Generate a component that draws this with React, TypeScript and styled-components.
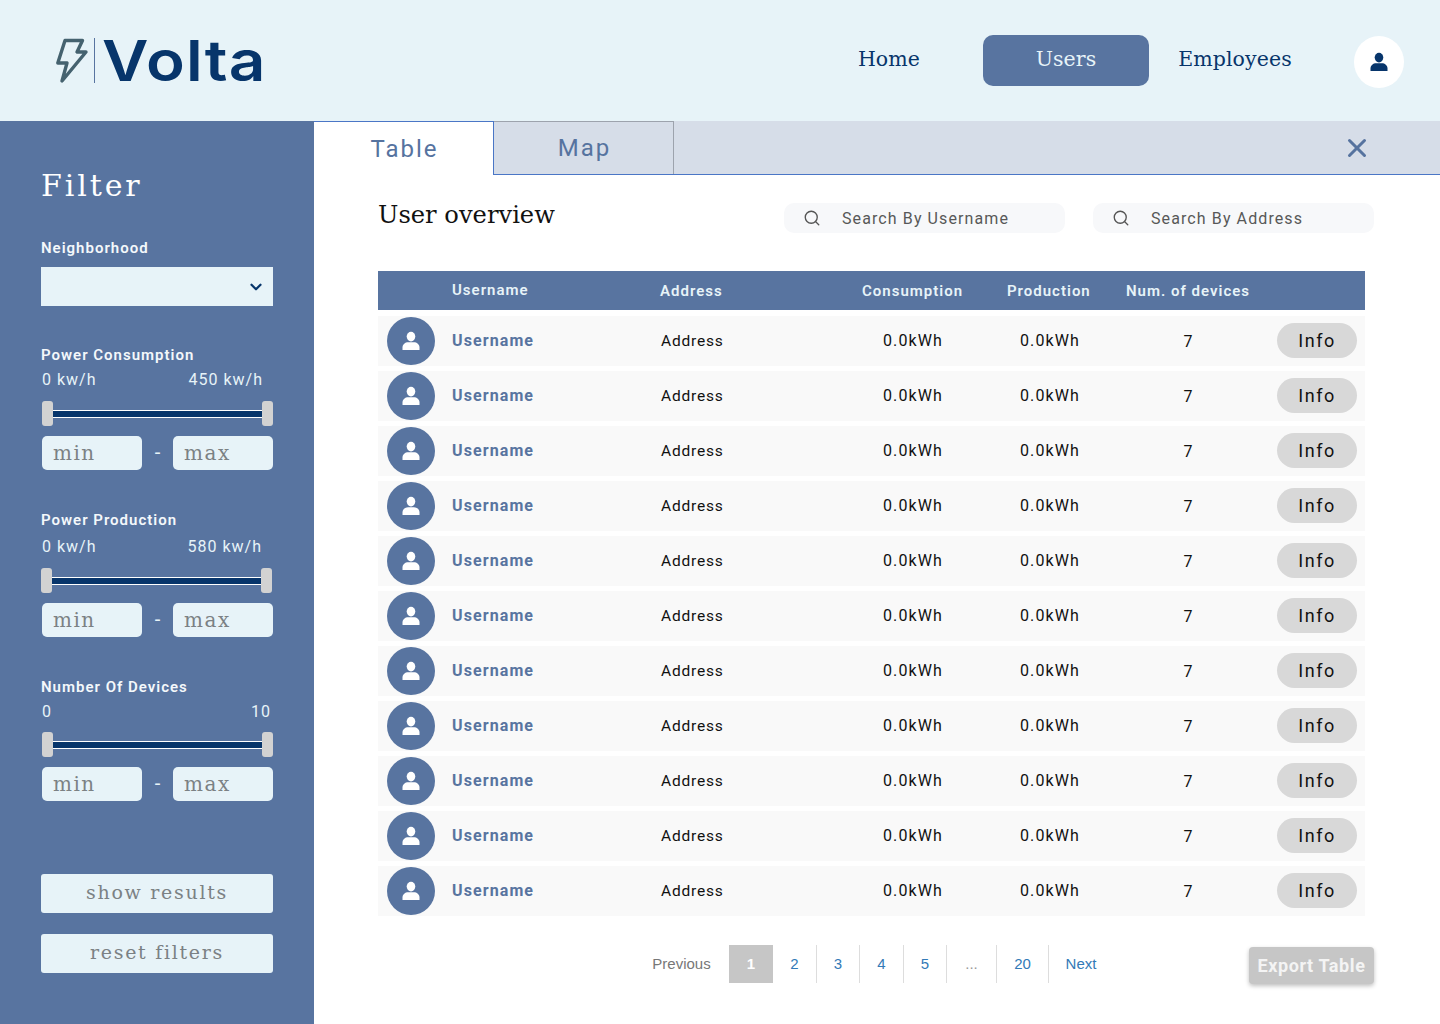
import React from 'react';
import styled, { createGlobalStyle } from 'styled-components';
import { ChevronDown, Search, X } from 'lucide-react';

const slab = `"DejaVu Serif", "Liberation Serif", serif`;
const sans = `Roboto, "Liberation Sans", sans-serif`;

const GlobalStyle = createGlobalStyle`
  html, body { margin: 0; padding: 0; background: #fff; }
  * { box-sizing: border-box; }
`;

const PersonIcon = ({ size, color }: { size: number; color: string }) => (
  <svg width={size} height={size} viewBox="0 0 20 20" fill={color}>
    <ellipse cx="10" cy="5.6" rx="4.3" ry="4.8" />
    <path d="M1.5 19v-2.6c0-3.2 2.8-5.2 5.6-5.2h5.8c2.8 0 5.6 2 5.6 5.2V19z" />
  </svg>
);

const BoltLogo = () => (
  <svg width="32" height="46" viewBox="0 0 32 46" fill="none">
    <path
      d="M9 2.5h17.500l-5.500 11.500h9L6 43 11 25H1.800z"
      stroke="#45626f"
      strokeWidth="3.4"
      strokeLinejoin="round"
    />
  </svg>
);

const ranges = [
  { title: 'Power Consumption', low: '0 kw/h', high: '450 kw/h', top: 40, valueGap: 7, valuePad: 10, sliderGap: 12, sliderLeft: 1 },
  { title: 'Power Production', low: '0 kw/h', high: '580 kw/h', top: 41, valueGap: 9, valuePad: 11, sliderGap: 12, sliderLeft: 0 },
  { title: 'Number Of Devices', low: '0', high: '10', top: 41, valueGap: 7, valuePad: 2, sliderGap: 11, sliderLeft: 1 },
];

const pages = [
  { label: '2', width: 43 },
  { label: '3', width: 43 },
  { label: '4', width: 44 },
  { label: '5', width: 43 },
  { label: '...', width: 50 },
  { label: '20', width: 52 },
  { label: 'Next', width: 65 },
];
const rows = Array.from({ length: 11 }, (_, i) => i);

export default function App() {
  return (
    <Page>
      <GlobalStyle />
      <Header>
        <Logo>
          <BoltLogo />
          <LogoDivider />
          <LogoText>Volta</LogoText>
        </Logo>
        <Nav>
          <NavItem>Home</NavItem>
          <NavItem $active>Users</NavItem>
          <NavItem>Employees</NavItem>
        </Nav>
        <ProfileButton>
          <PersonIcon size={20} color="#07356b" />
        </ProfileButton>
      </Header>

      <Body>
        <Sidebar>
          <FilterTitle>Filter</FilterTitle>
          <FieldLabel>Neighborhood</FieldLabel>
          <SelectBox>
            <ChevronDown size={18} color="#07356b" strokeWidth={3} />
          </SelectBox>
          {ranges.map((r) => (
            <RangeGroup key={r.title} $top={r.top}>
              <FieldLabel>{r.title}</FieldLabel>
              <RangeValues $gap={r.valueGap} $pad={r.valuePad}>
                <span>{r.low}</span>
                <span>{r.high}</span>
              </RangeValues>
              <Slider $gap={r.sliderGap} $left={r.sliderLeft}>
                <Thumb />
                <Track />
                <Thumb />
              </Slider>
              <MinMaxRow>
                <MinMaxInput>min</MinMaxInput>
                <Dash>-</Dash>
                <MinMaxInput>max</MinMaxInput>
              </MinMaxRow>
            </RangeGroup>
          ))}
          <SideButton $top={73}>show results</SideButton>
          <SideButton $top={21}>reset filters</SideButton>
        </Sidebar>

        <Main>
          <TabBar>
            <Tab $active>Table</Tab>
            <Tab>Map</Tab>
            <CloseWrap>
              <X size={30} color="#56739f" strokeWidth={2.4} />
            </CloseWrap>
          </TabBar>

          <Content>
            <TitleRow>
              <Title>User overview</Title>
              <SearchBox>
                <Search size={18} color="#555" strokeWidth={1.8} />
                <span>Search By Username</span>
              </SearchBox>
              <SearchBox>
                <Search size={18} color="#555" strokeWidth={1.8} />
                <span>Search By Address</span>
              </SearchBox>
            </TitleRow>

            <TableHead>
              <HeadCell $up>Username</HeadCell>
              <HeadCell>Address</HeadCell>
              <HeadCell>Consumption</HeadCell>
              <HeadCell>Production</HeadCell>
              <HeadCell>Num. of devices</HeadCell>
            </TableHead>

            <RowList>
              {rows.map((i) => (
                <Row key={i}>
                  <Avatar>
                    <PersonIcon size={20} color="#fff" />
                  </Avatar>
                  <UserName>Username</UserName>
                  <AddressCell>Address</AddressCell>
                  <Cell>0.0kWh</Cell>
                  <Cell>0.0kWh</Cell>
                  <CountCell>7</CountCell>
                  <InfoButton>Info</InfoButton>
                </Row>
              ))}
            </RowList>

            <Footer>
              <Pagination>
                <PagePrev>Previous</PagePrev>
                <PageCurrent>1</PageCurrent>
                {pages.map((p) => (
                  <PageLink key={p.label} $muted={p.label === '...'} $width={p.width}>
                    {p.label}
                  </PageLink>
                ))}
              </Pagination>
              <ExportButton>Export Table</ExportButton>
            </Footer>
          </Content>
        </Main>
      </Body>
    </Page>
  );
}

const Page = styled.div`
  width: 1440px;
  height: 1024px;
  overflow: hidden;
  display: flex;
  flex-direction: column;
  font-family: ${sans};
`;

const Header = styled.header`
  height: 121px;
  background: #e7f3f8;
  display: flex;
  align-items: center;
  padding: 0 36px 0 56px;
`;

const Logo = styled.div`
  display: flex;
  align-items: center;
  flex: 1;
`;

const LogoDivider = styled.div`
  width: 1px;
  height: 45px;
  background: #5874a0;
  margin: 0 7px 0 6px;
`;

const LogoText = styled.span`
  display: inline-block;
  font-family: Inter, ${sans};
  font-weight: 600;
  font-size: 56px;
  line-height: 56px;
  letter-spacing: 1px;
  color: #07356b;
  transform: scaleX(1.14);
  transform-origin: left center;
`;

const Nav = styled.nav`
  display: flex;
  align-items: center;
  gap: 3px;
  margin-right: 36px;
  margin-top: -1px;
`;

const NavItem = styled.div<{ $active?: boolean }>`
  width: 166px;
  height: 51px;
  padding-bottom: 3px;
  display: flex;
  align-items: center;
  justify-content: center;
  border-radius: 10px;
  font-family: ${slab};
  font-size: 20.5px;
  letter-spacing: 0.1px;
  color: ${(p) => (p.$active ? '#e7f3f8' : '#07356b')};
  background: ${(p) => (p.$active ? '#5874a0' : 'transparent')};
  &:first-child { margin-right: 8px; }
`;

const ProfileButton = styled.div`
  width: 50px;
  height: 52px;
  margin-top: 2px;
  border-radius: 50%;
  background: #fff;
  display: flex;
  align-items: center;
  justify-content: center;
`;

const Body = styled.div`
  flex: 1;
  display: flex;
  min-height: 0;
`;

const Sidebar = styled.aside`
  width: 314px;
  background: #5874a0;
  padding: 47px 41px 0;
  display: flex;
  flex-direction: column;
  color: #e7f3f8;
`;

const FilterTitle = styled.h2`
  margin: 0 0 35px;
  font-family: ${slab};
  font-weight: 400;
  font-size: 30px;
  line-height: 36px;
  letter-spacing: 2.9px;
  color: #fff;
`;

const FieldLabel = styled.div`
  font-size: 15px;
  line-height: 18px;
  font-weight: 600;
  letter-spacing: 1px;
  color: #f4f8fb;
`;

const SelectBox = styled.div`
  width: 232px;
  height: 39px;
  margin-top: 10px;
  background: #e7f3f8;
  display: flex;
  align-items: center;
  justify-content: flex-end;
  padding-right: 8px;
`;

const RangeGroup = styled.section<{ $top: number }>`
  margin-top: ${(p) => p.$top}px;
`;

const RangeValues = styled.div<{ $gap: number; $pad: number }>`
  display: flex;
  justify-content: space-between;
  padding: 0 ${(p) => p.$pad}px 0 1px;
  margin-top: ${(p) => p.$gap}px;
  font-size: 16px;
  line-height: 18px;
  letter-spacing: 1px;
  color: #e7f3f8;
`;

const Slider = styled.div<{ $gap: number; $left: number }>`
  display: flex;
  align-items: center;
  margin: ${(p) => p.$gap}px 0 10px ${(p) => p.$left}px;
  width: 231px;
`;

const Thumb = styled.div`
  width: 11px;
  height: 25px;
  border-radius: 3px;
  background: #d2d2d2;
  flex: none;
`;

const Track = styled.div`
  flex: 1;
  height: 8px;
  background: #07356b;
  border-top: 1px solid #fff;
  border-bottom: 1px solid #fff;
`;

const MinMaxRow = styled.div`
  display: flex;
  align-items: center;
  margin-left: 1px;
  width: 231px;
`;

const MinMaxInput = styled.div`
  width: 100px;
  height: 34px;
  border-radius: 5px;
  background: #e7f3f8;
  padding-left: 11px;
  font-family: ${slab};
  font-size: 20px;
  line-height: 34px;
  letter-spacing: 1.5px;
  color: #7b8184;
`;

const Dash = styled.span`
  width: 31px;
  padding-bottom: 2px;
  text-align: center;
  font-size: 20px;
  color: #e7f3f8;
`;

const SideButton = styled.button<{ $top: number }>`
  all: unset;
  box-sizing: border-box;
  width: 232px;
  height: 39px;
  margin-top: ${(p) => p.$top}px;
  padding-bottom: 3px;
  border-radius: 3px;
  background: #e7f3f8;
  text-align: center;
  font-family: ${slab};
  font-size: 19px;
  letter-spacing: 1.7px;
  color: #7b8184;
`;

const Main = styled.main`
  flex: 1;
  min-width: 0;
  display: flex;
  flex-direction: column;
`;

const TabBar = styled.div`
  height: 54px;
  background: #d6dde8;
  border-bottom: 1px solid #4a76c6;
  display: flex;
  align-items: stretch;
`;

const Tab = styled.div<{ $active?: boolean }>`
  width: 180px;
  display: flex;
  align-items: center;
  justify-content: center;
  padding-left: 2px;
  font-size: 24px;
  letter-spacing: 2px;
  color: #56739f;
  border-top: 1px solid ${(p) => (p.$active ? '#4a76c6' : '#9da3ad')};
  border-right: 1px solid ${(p) => (p.$active ? '#4a76c6' : '#9da3ad')};
  background: ${(p) => (p.$active ? '#fff' : 'transparent')};
  margin-bottom: ${(p) => (p.$active ? '-1px' : '0')};
`;

const CloseWrap = styled.div`
  margin-left: auto;
  padding-right: 68px;
  display: flex;
  align-items: center;
`;

const Content = styled.div`
  flex: 1;
  padding: 0 66px 0 64px;
  display: flex;
  flex-direction: column;
`;

const TitleRow = styled.div`
  height: 96px;
  display: flex;
  align-items: flex-start;
  padding-top: 28px;
`;

const Title = styled.h1`
  margin: 0 auto 0 0;
  font-family: ${slab};
  font-weight: 400;
  font-size: 24.2px;
  line-height: 24px;
  color: #111;
`;

const SearchBox = styled.div`
  width: 281px;
  height: 30px;
  margin-left: 28px;
  border-radius: 10px;
  background: #f7f8fa;
  display: flex;
  align-items: center;
  gap: 21px;
  padding-left: 19px;
  font-size: 16px;
  letter-spacing: 1.1px;
  color: #585858;
`;

const TableHead = styled.div`
  width: 987px;
  height: 39px;
  background: #5874a0;
  display: grid;
  grid-template-columns: 74px 208px 202px 145px 119px auto;
  align-items: center;
`;

const HeadCell = styled.div<{ $up?: boolean }>`
  font-size: 15px;
  font-weight: 600;
  letter-spacing: 1px;
  color: #e7f3f8;
  &:first-child { grid-column: 2; }
  margin-top: ${(p) => (p.$up ? '-2px' : '1px')};
`;

const RowList = styled.div`
  margin-top: 6px;
  display: flex;
  flex-direction: column;
  gap: 5px;
`;

const Row = styled.div`
  width: 987px;
  height: 50px;
  background: #f9f9f9;
  display: grid;
  grid-template-columns: 74px 209px 222px 137px 106px 124px 1fr;
  align-items: center;
  font-size: 16px;
  letter-spacing: 1.1px;
  color: #111;
`;

const Avatar = styled.div`
  width: 48px;
  height: 48px;
  margin-left: 9px;
  border-radius: 50%;
  background: #5874a0;
  display: flex;
  align-items: center;
  justify-content: center;
`;

const UserName = styled.div`
  margin-bottom: 2px;
  font-weight: 700;
  color: #5874a0;
`;

const Cell = styled.div`
  margin-bottom: 2px;
`;

const AddressCell = styled(Cell)`
  margin-bottom: 0;
  font-size: 15.5px;
  letter-spacing: 0.8px;
`;

const CountCell = styled.div`
  padding-left: 1px;
  text-align: center;
`;

const InfoButton = styled.button`
  all: unset;
  width: 80px;
  height: 35px;
  margin: 0 0 2px 27px;
  border-radius: 18px;
  background: #d8d8d8;
  text-align: center;
  font-family: ${sans};
  font-size: 18px;
  letter-spacing: 1.5px;
  color: #111;
`;

const Footer = styled.div`
  position: relative;
  display: flex;
  margin-top: 29px;
  padding-left: 256px;
`;

const Pagination = styled.div`
  display: flex;
  height: 38px;
  font-family: "Liberation Sans", Arial, sans-serif;
  font-size: 15px;
`;

const PagePrev = styled.div`
  width: 95px;
  padding-bottom: 2px;
  display: flex;
  align-items: center;
  justify-content: center;
  color: #777;
`;

const PageCurrent = styled.div`
  width: 44px;
  padding-bottom: 2px;
  display: flex;
  align-items: center;
  justify-content: center;
  background: #c6c6c6;
  color: #fff;
  font-weight: 700;
`;

const PageLink = styled.div<{ $muted?: boolean; $width: number }>`
  width: ${(p) => p.$width}px;
  padding-bottom: 2px;
  display: flex;
  align-items: center;
  justify-content: center;
  border-left: 1px solid #ddd;
  color: ${(p) => (p.$muted ? '#999' : '#337ab7')};
  &:nth-child(3) { border-left: none; }
`;

const ExportButton = styled.button`
  all: unset;
  position: absolute;
  right: 0;
  top: 2px;
  width: 125px;
  height: 37px;
  border-radius: 4px;
  background: #c6c6c6;
  box-shadow: 0 2px 4px rgba(0, 0, 0, 0.25);
  text-align: center;
  font-family: ${sans};
  font-size: 18px;
  font-weight: 700;
  letter-spacing: 0.6px;
  color: #f4f4f4;
`;
